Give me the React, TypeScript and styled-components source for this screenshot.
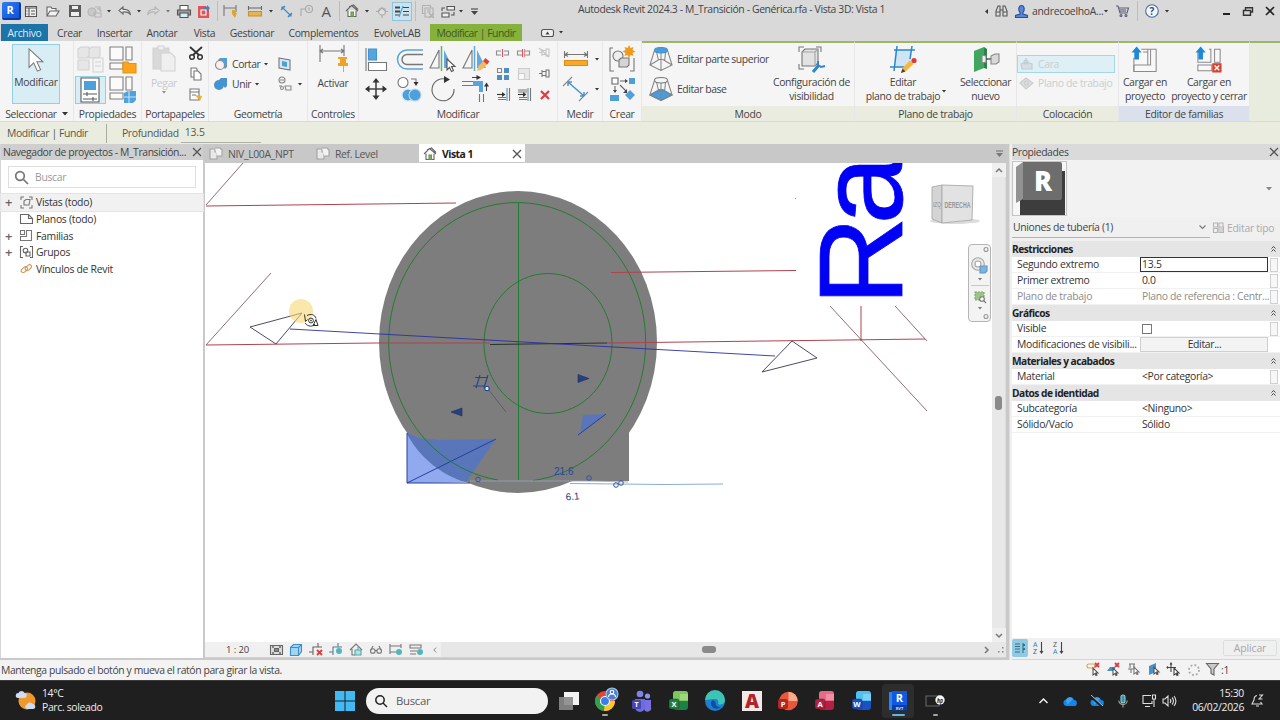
import React from 'react';
import styled, { createGlobalStyle } from 'styled-components';

const GlobalStyle = createGlobalStyle`
  * { box-sizing: border-box; }
  body {
    margin: 0;
    overflow: hidden;
    font-family: "Open Sans", "Noto Sans", sans-serif;
    font-size: 10.4px;
    letter-spacing: -0.33px;
    color: #444;
  }
`;

const Page = styled.div`
  width: 1280px;
  height: 720px;
  display: flex;
  flex-direction: column;
  background: #d9d9d9;
  white-space: nowrap;
`;

const Svg = styled.svg.attrs((p) => ({ strokeWidth: p.strokeWidth ?? 1.1 }))`
  display: block;
  flex-shrink: 0;
  overflow: visible;
  fill: none;
  letter-spacing: 0;
`;

const Spacer = styled.div<{ $w?: number }>`
  ${(p) => (p.$w ? `width: ${p.$w}px; flex-shrink: 0;` : 'flex: 1;')}
`;

const Text = styled.span<{ $ls?: number; $size?: number; $color?: string }>`
  ${(p) => (p.$ls ? `letter-spacing: ${p.$ls}px;` : '')}
  ${(p) => (p.$size ? `font-size: ${p.$size}px;` : '')}
  ${(p) => (p.$color ? `color: ${p.$color};` : '')}
`;

/* ---------- title bar ---------- */

const TitleBar = styled.div`
  height: 24px;
  display: flex;
  align-items: center;
  padding-bottom: 2px;
`;

const QatCell = styled.div<{ $w: number }>`
  width: ${(p) => p.$w}px;
  height: 22px;
  display: flex;
  align-items: center;
  justify-content: center;
  flex-shrink: 0;
`;

const QatActive = styled.div`
  width: 20px;
  height: 19px;
  display: flex;
  align-items: center;
  justify-content: center;
  background: #c9e4f0;
  border: 1px solid #8cc4dc;
`;

const QatSeparator = styled.div`
  width: 1px;
  height: 20px;
  background: #bdbdbd;
`;

const WindowTitle = styled.div`
  width: 402px;
  height: 22px;
  padding-left: 95px;
  line-height: 18px;
  letter-spacing: -0.37px;
  flex-shrink: 0;
`;

const UserName = styled.div`
  width: 70px;
  line-height: 20px;
  letter-spacing: -0.28px;
  flex-shrink: 0;
`;

const AppLogo = styled.div`
  width: 19px;
  height: 18px;
  background: linear-gradient(135deg, #2d7bf5, #0f55d8);
  border-right: 2px solid #0b3c9c;
  border-bottom: 2px solid #0b3c9c;
  border-radius: 2px;
  color: #fff;
  font-weight: 700;
  font-size: 11px;
  line-height: 16px;
  text-align: center;
`;

const TabsRow = styled.div`
  height: 17px;
  display: flex;
  align-items: stretch;
`;

const RibbonTab = styled.div<{ $w: number; $kind?: string }>`
  width: ${(p) => p.$w}px;
  text-align: center;
  line-height: 18px;
  ${(p) => (p.$kind === 'file' ? 'background: #1d74a8; color: #d8eef8; margin-left: 1px;' : '')}
  ${(p) => (p.$kind === 'context' ? 'background: #86b13c; color: #3f5a1c;' : '')}
`;

const TabEnd = styled.div`
  display: flex;
  align-items: center;
  gap: 5px;
  padding-left: 19px;
`;

/* ---------- ribbon ---------- */

const Ribbon = styled.div`
  height: 81px;
  display: flex;
  background: #e8ecdf;
  border-bottom: 1px solid #d8dbd2;
`;

const Group = styled.div<{ $w: number; $context?: boolean }>`
  width: ${(p) => p.$w}px;
  flex-shrink: 0;
  display: flex;
  flex-direction: column;
  background: #f5f5f5;
  border-right: 1px solid #e6e7e6;
  border-top: ${(p) => (p.$context ? '2px solid #9db66c' : '0')};
`;

const GroupBody = styled.div<{ $context?: boolean }>`
  height: ${(p) => (p.$context ? 63 : 65)}px;
  display: flex;
`;

const GroupTitle = styled.div<{ $bg?: string }>`
  height: 15px;
  display: flex;
  align-items: center;
  justify-content: center;
  gap: 5px;
  background: ${(p) => p.$bg ?? '#f5f5f5'};
`;

const RibbonTail = styled.div`
  flex: 1;
  border-top: 2px solid #9db66c;
`;

const SelectButton = styled.div`
  width: 48px;
  height: 60px;
  margin: 3px 0 0 12px;
  padding-top: 2px;
  display: flex;
  flex-direction: column;
  align-items: center;
  gap: 2px;
  background: #d9edf5;
  border: 1px solid #93cde6;
`;

const IconGrid = styled.div<{ $cols: string; $rows: string; $pt?: number }>`
  display: grid;
  grid-template-columns: ${(p) => p.$cols};
  grid-template-rows: ${(p) => p.$rows};
  padding-top: ${(p) => p.$pt ?? 0}px;
  place-items: center;
  align-content: start;
`;

const PressedBox = styled.div`
  width: 31px;
  height: 28px;
  display: flex;
  align-items: center;
  justify-content: center;
  background: #d9edf5;
  border: 1px solid #93cde6;
`;

const BigButton = styled.div<{ $w: number; $dim?: boolean; $pt?: number; $pl?: number }>`
  width: ${(p) => p.$w}px;
  padding-top: ${(p) => p.$pt ?? 3}px;
  padding-left: ${(p) => p.$pl ?? 0}px;
  display: flex;
  flex-direction: column;
  align-items: center;
  flex-shrink: 0;
  color: ${(p) => (p.$dim ? '#c8c8c8' : '#444')};
`;

const BigLabel = styled.div<{ $pt?: number }>`
  text-align: center;
  line-height: 13.5px;
  padding-top: ${(p) => p.$pt ?? 4}px;
`;

const Stack = styled.div<{ $w: number; $pt: number }>`
  width: ${(p) => p.$w}px;
  padding-top: ${(p) => p.$pt}px;
  display: flex;
  flex-direction: column;
  align-items: flex-start;
`;

const StackRow = styled.div<{ $h: number; $pl?: number; $gap?: number; $dim?: boolean; $boxed?: boolean }>`
  height: ${(p) => p.$h}px;
  padding-left: ${(p) => p.$pl ?? 0}px;
  display: flex;
  align-items: center;
  gap: ${(p) => p.$gap ?? 4}px;
  ${(p) => (p.$dim ? 'color: #c9cdce;' : '')}
  ${(p) => (p.$boxed ? 'width: 98px; background: #def0f5; border: 1px solid #a5d8e6;' : 'border: 1px solid transparent;')}
`;

const OptionsBar = styled.div`
  height: 22px;
  display: flex;
  align-items: center;
  background: #e9ecdf;
  color: #555a4c;
  padding: 0 0 0 7px;
`;

const OptionsDivider = styled.div`
  width: 1px;
  height: 19px;
  margin: 0 15px 0 18px;
  background: #a9aca0;
`;

const OptionsInput = styled.div`
  width: 80px;
  height: 19px;
  padding-left: 4px;
  margin-left: 2px;
  line-height: 17px;
  letter-spacing: -0.15px;
  border-bottom: 1px solid #aeb1a5;
`;

/* ---------- main area ---------- */

const Main = styled.div`
  height: 516px;
  display: flex;
  background: #c9c9c9;
`;

const Browser = styled.div`
  width: 203px;
  height: 514px;
  display: flex;
  flex-direction: column;
  background: #fff;
  border-left: 1px solid #d5d5d5;
`;

const PanelHeader = styled.div<{ $bg?: string }>`
  height: 16px;
  padding: 0 2px 0 2px;
  display: flex;
  align-items: center;
  justify-content: space-between;
  background: ${(p) => p.$bg ?? '#cfcfcf'};
  flex-shrink: 0;
`;

const SearchBox = styled.div`
  width: 188px;
  height: 22px;
  margin: 6px 0 6px 7px;
  padding-left: 6px;
  display: flex;
  align-items: center;
  gap: 7px;
  flex-shrink: 0;
  border: 1px solid #dedede;
  color: #999;
`;

const TreeRow = styled.div<{ $selected?: boolean }>`
  height: 16.7px;
  display: flex;
  align-items: center;
  color: #333;
  letter-spacing: -0.28px;
  outline: ${(p) => (p.$selected ? '1px solid #e4e4e4' : '0')};
  background: ${(p) => (p.$selected ? '#f1f1f1' : 'transparent')};
`;

const Expander = styled.div`
  width: 15px;
  text-align: center;
  color: #666;
  font-size: 13px;
  font-weight: 600;
`;

const TreeIcon = styled.div`
  width: 20px;
  display: flex;
  justify-content: center;
`;

const Workspace = styled.div`
  width: 803px;
  padding-left: 2px;
  display: flex;
  flex-direction: column;
`;

const DocTabs = styled.div`
  height: 19px;
  padding-bottom: 1px;
  display: flex;
  align-items: center;
  background: #c8c8c8;
`;

const DocTab = styled.div<{ $w: number; $active?: boolean }>`
  width: ${(p) => p.$w}px;
  height: 18px;
  padding: 1px 4px 0 4px;
  display: flex;
  align-items: center;
  gap: 5px;
  background: ${(p) => (p.$active ? '#fff' : 'transparent')};
  color: ${(p) => (p.$active ? '#222' : '#555')};
  font-weight: ${(p) => (p.$active ? 700 : 400)};
`;

const ViewRow = styled.div`
  height: 479px;
  display: flex;
`;

const Viewport = styled.div`
  position: relative;
  width: 787px;
  height: 479px;
  background: #fff;
  overflow: hidden;
`;

const CubeSlot = styled.div`
  position: absolute;
  left: 722px;
  top: 18px;
`;

const NavBar = styled.div`
  position: absolute;
  left: 763px;
  top: 81px;
  width: 23px;
  height: 78px;
  padding: 2px 0;
  display: flex;
  flex-direction: column;
  align-items: center;
  justify-content: space-between;
  background: #f3f3f3;
  border: 1px solid #b5b5b5;
  border-radius: 4px;
`;

const NavRule = styled.div`
  width: 18px;
  height: 1px;
  background: #c9c9c9;
`;

const VScroll = styled.div`
  width: 14px;
  background: #e8e8e8;
  display: flex;
  flex-direction: column;
  align-items: center;
  border-right: 1px solid #dcdcdc;
`;

const ScrollArrow = styled.div`
  height: 14px;
  width: 14px;
  display: flex;
  align-items: center;
  justify-content: center;
  background: #efefef;
`;

const VThumb = styled.div`
  width: 7px;
  height: 14px;
  margin-top: 219px;
  border-radius: 3px;
  background: #8a8a8a;
`;

const ViewControls = styled.div`
  height: 16px;
  display: flex;
  align-items: center;
  background: #e7e7e7;
  border-bottom: 1px solid #d2d2d2;
`;

const ControlIcons = styled.div`
  height: 15px;
  display: flex;
  align-items: center;
  gap: 4px;
  padding-left: 21px;
  width: 236px;
  background: #f0f0f0;
`;

const ScaleText = styled.div`
  width: 26px;
  font-size: 9.5px;
  letter-spacing: -0.1px;
`;

const IconSlot = styled.div<{ $w: number }>`
  width: ${(p) => p.$w}px;
  display: flex;
  justify-content: center;
  flex-shrink: 0;
`;

const HThumb = styled.div`
  width: 14px;
  height: 7px;
  margin-left: 261px;
  border-radius: 3px;
  background: #8a8a8a;
`;

const Properties = styled.div`
  width: 271px;
  height: 516px;
  margin-left: 3px;
  padding-left: 2px;
  display: flex;
  flex-direction: column;
  background: #f0f0f0;
  border-left: 1px solid #ddd;
`;

const PropertiesTitle = styled(PanelHeader)`
  padding-left: 0;
`;

const TypePreview = styled.div`
  height: 57px;
  display: flex;
  align-items: center;
  justify-content: space-between;
  padding-right: 8px;
  background: #f2f2f2;
`;

const TypeCombo = styled.div`
  height: 21px;
  display: flex;
  align-items: center;
`;

const ComboField = styled.div`
  width: 198px;
  height: 21px;
  padding: 0 4px 0 1px;
  display: flex;
  align-items: center;
  justify-content: space-between;
  border-bottom: 1px solid #b3b3b3;
`;

const EditType = styled.div`
  display: flex;
  align-items: center;
  gap: 3px;
  padding-left: 3px;
  color: #aaa;
  letter-spacing: -0.26px;
`;

const PropList = styled.div`
  flex: 1;
  margin-top: 3px;
  background: #fff;
`;

const PropHeading = styled.div`
  height: 16px;
  display: flex;
  align-items: center;
  justify-content: space-between;
  padding: 0 4px 0 0;
  background: #e5e5e5;
  color: #222;
  font-weight: 700;
  font-size: 10.2px;
  letter-spacing: -0.52px;
`;

const PropRow = styled.div<{ $dim?: boolean }>`
  height: 16px;
  display: grid;
  grid-template-columns: 128px 130px 9px;
  align-items: center;
  border-bottom: 1px solid #f1f1f1;
  color: ${(p) => (p.$dim ? '#8c8c8c' : '#333')};
`;

const PropName = styled.div`
  padding-left: 5px;
  line-height: 15px;
  letter-spacing: -0.28px;
`;

const PropValue = styled.div<{ $kind?: string }>`
  height: 15px;
  width: 128px;
  padding-left: 1px;
  line-height: 13px;
  border: 1px solid transparent;
  ${(p) => (p.$kind === 'focus' ? 'border-color: #333; line-height: 13px; background: #fff; letter-spacing: -0.2px;' : '')}
  ${(p) => (p.$kind === 'button' ? 'border-color: #d0d0d0; background: #f3f3f3; text-align: center; line-height: 13px;' : '')}
`;

const CheckBox = styled.div`
  width: 10px;
  height: 10px;
  margin: 2px 0 0 0;
  border: 1px solid #777;
  background: #fff;
`;

const AssocButton = styled.div`
  width: 8px;
  height: 14px;
  border: 1px solid #d0d0d0;
  background: #f7f7f7;
`;

const PropFooter = styled.div`
  height: 22px;
  display: flex;
  align-items: center;
  gap: 5px;
  padding: 0 3px 2px 0;
  flex-shrink: 0;
  border-bottom: 1px solid #d5d5d5;
`;

const SortActive = styled.div`
  width: 16px;
  height: 18px;
  display: flex;
  align-items: center;
  justify-content: center;
  background: #8fc9e2;
  border-radius: 2px;
`;

const ApplyButton = styled.div`
  width: 54px;
  height: 16px;
  line-height: 14px;
  text-align: center;
  color: #a6a6a6;
  letter-spacing: -0.1px;
  border: 1px solid #dedede;
  border-radius: 2px;
`;

const StatusBar = styled.div`
  height: 20px;
  display: flex;
  align-items: center;
  background: #f3f3f3;
  padding: 0 0 1px 1px;
`;

/* ---------- windows taskbar ---------- */

const Taskbar = styled.div`
  height: 40px;
  display: flex;
  align-items: center;
  background: #1f1f1f;
  border-top: 1px solid #3a3a3a;
  color: #eee;
`;

const Weather = styled.div`
  width: 319px;
  padding-left: 16px;
  display: flex;
  align-items: center;
  gap: 6px;
  line-height: 13.5px;
`;

const TaskSearch = styled.div`
  width: 182px;
  height: 26px;
  margin-left: 11px;
  padding-left: 9px;
  display: flex;
  align-items: center;
  gap: 9px;
  border-radius: 13px;
  background: #f2f2f2;
  color: #5c5c5c;
  font-size: 11.4px;
`;

const TaskCell = styled.div<{ $active?: boolean }>`
  width: 32.6px;
  height: 34px;
  margin: 0 2px;
  display: flex;
  align-items: center;
  justify-content: center;
  border-radius: 4px;
  background: ${(p) => (p.$active ? '#2d2d2d' : 'transparent')};
`;

const TaskIcons = styled.div`
  display: flex;
  padding-left: 2.5px;
`;

const Clock = styled.div`
  width: 67px;
  text-align: right;
  line-height: 13.5px;
`;

/* ---------- small pieces ---------- */

const Caret = ({ color = '#333', size = 5 }: { color?: string; size?: number }) => (
  <Svg width={size} height={size * 0.6} viewBox="0 0 5 3"><path d="M0 0h5L2.5 3z" fill={color} /></Svg>
);

const Cross = ({ size = 8, color = '#555', sw = 1.3 }: { size?: number; color?: string; sw?: number }) => (
  <Svg width={size} height={size} viewBox="0 0 8 8" stroke={color} strokeWidth={sw}><path d="M0 0l8 8M8 0L0 8" /></Svg>
);

const Qat = ({ w, children }: { w: number; children?: React.ReactNode }) => <QatCell $w={w}>{children}</QatCell>;

const House = () => (
  <Svg width="14" height="14" viewBox="0 0 14 14" stroke="#666">
    <path d="M3 6.5v6h8v-6" fill="#fff" />
    <path d="M1 7l5.5-5.5L13 7M4 3L8.5 1l4.5 4.5" />
    <path d="M6 12.500V8h2.500v4.500z" fill="#8cb36a" stroke="#6c8e50" />
  </Svg>
);

const PlanIcon = () => (
  <Svg width="14" height="13" viewBox="0 0 14 13" stroke="#a3a3a3">
    <path d="M1 2h5v3h2v7H1z" fill="#e9e9e9" /><path d="M6 1h5l2 2v6H8" fill="#f3f3f3" />
  </Svg>
);

const chevrons = (
  <Svg width="5" height="6" viewBox="0 0 5 6" stroke="#333" strokeWidth=".9"><path d="M.5 2.500l2-2 2 2M.5 5.500l2-2 2 2" /></Svg>
);

const FamilySheets = ({ overlay }: { overlay: 'folder' | 'grid' }) => (
  <Svg width="27" height="27" viewBox="0 0 27 27" stroke="#808080">
    <path d="M1 1h13v13H1zM17 1h6v13h-6zM1 17h13v6H1z" fill="#fbfbfb" />
    {overlay === 'folder' ? (
      <path d="M14 16h5l1 1.500h7V27H14z" fill="#fba41c" stroke="#e8930f" />
    ) : (
      <><path d="M15 17l4-2h8v9l-3 3h-9z" fill="#4fa3dc" stroke="none" /><path d="M15 21h12M20 15v12" stroke="#c5e3f5" /></>
    )}
  </Svg>
);

/* truncated pyramid with either its top or its base filled */
const Frustum = ({ top }: { top?: boolean }) => (
  <Svg width="24" height="26" viewBox="0 0 26 27" stroke="#858585">
    {!top && <path d="M1 20l12-6 12 6-12 6z" fill="#4b9dda" stroke="#3d8cc8" />}
    <path d="M6 4L1 20l12 6 12-6-5-16M8 5l2 9M18 5l-1 10M13 7v19M1 20l10-6h4l10 6" />
    <ellipse cx="13" cy="4" rx="7" ry="3" fill={top ? '#4b9dda' : '#f5f5f5'} stroke={top ? '#3d8cc8' : '#777'} />
  </Svg>
);

const Mirror = ({ pencil }: { pencil?: boolean }) => (
  <Svg width="27" height="26" viewBox="0 0 27 26" stroke="#777">
    <path d="M10 4v18H1z" fill="#f6f6f6" />
    <path d="M15 4v18h9z" fill="#63a9de" stroke="none" />
    <path d="M12.500 0v25" stroke={pencil ? '#56aee0' : '#58b77a'} strokeWidth="1.500" />
    {pencil ? (
      <><path d="M15 25l1.500-5 6-6 3.500 3.500-6 6z" fill="#f4b866" stroke="none" /><path d="M21 15l2.500-3 4 3.500-2.500 3z" fill="#d9423a" stroke="none" /></>
    ) : (
      <path d="M18 13v11l2.500-2.500 2 4 2-1-2-4H26z" fill="#fff" stroke="#555" />
    )}
  </Svg>
);

const Trim = () => (
  <Svg width="27" height="26" viewBox="0 0 27 26" stroke="#777">
    <path d="M0 5.500h11M0 9.500h11" />
    <path d="M11 5h10v11h-4V10h-6z" fill="#57a5dd" stroke="none" />
    <path d="M17.500 18v8M21.500 18v8" />
    <path d="M10 1.500h5M24.500 15v-5" stroke="#444" />
    <path d="M14.500-1l4.500 2.500-4.500 2.500zM22 10.500l2.500-4 2.500 4z" fill="#333" stroke="none" />
  </Svg>
);

/* left / right jaws with a red split line */
const Split = ({ two }: { two?: boolean }) => (
  <Svg width="13" height="8" viewBox="0 0 13 8" stroke="#8d8d8d">
    <path d="M5 2H.5v4H5M8 2h4.500v4H8" />
    <path d={two ? 'M5.500 0v8' : 'M6.500 0v8'} stroke="#e05560" />
    {two && <path d="M7.500 0v8" stroke="#e08a90" />}
  </Svg>
);

const PinSmall = ({ color, cut }: { color: string; cut?: boolean }) => (
  <Svg width="11" height="9" viewBox="0 0 11 9" stroke={color}>
    <path d="M0 4.500h3M3 1v7M3 2.500h4v4H3M7 1h3v7H7z" />
    {cut && <path d="M0 0l10 9" />}
  </Svg>
);

const ExtendSmall = ({ multi }: { multi?: boolean }) => (
  <Svg width="14" height="13" viewBox="0 0 14 13" stroke="#777">
    <path d="M11 0v13" stroke="#5f8fae" /><path d="M13.500 0v13" />
    <path d="M1 6.500h6" stroke="#333" /><path d="M6 4l3.500 2.500L6 9z" fill="#333" stroke="none" />
    <path d="M2 9.500h8M2 11.500h8" />
    {multi && <path d="M1 2h9M1 4h9" />}
  </Svg>
);

const LoadProject = ({ close }: { close?: boolean }) => (
  <Svg width="26" height="27" viewBox="0 0 28 28" stroke="#8a8a8a">
    {close ? (
      <path d="M14 3h2v14H2V6M20 3h6v14h-6zM2 20h15v6H2z" fill="#f8f8f8" />
    ) : (
      <><path d="M10 3h16v24H2v-7" fill="#f8f8f8" /><path d="M12 6h5v14H2v-8M20 3v17H2v7M17 20V3" /></>
    )}
    <path d="M5 0l5.500 6.500H7.500V14h-5V6.500H-.5z" fill="#1e88d6" stroke="none" />
    {close && <><rect x="17.500" y="18" width="10" height="10" fill="#d9402f" stroke="none" /><path d="M20 20.500l5 5M25 20.500l-5 5" stroke="#fff" strokeWidth="1.500" /></>}
  </Svg>
);

/* ---------- 3D view ---------- */

const ModelView = () => (
  <Svg width="787" height="479" viewBox="205 163 787 479" strokeWidth="1">
    <path d="M407 432h222v49H407z" fill="#7d7d7d" />
    <ellipse cx="518" cy="342" rx="139" ry="151" fill="#7d7d7d" />
    <path d="M407 433l12 5 20 2 57-1-16 23-14 20-59 1z" fill="#5475c4" fillOpacity=".88" />
    <path d="M407 434c12 22 32 40 58 48l-58 1z" fill="#90a9ef" />
    <path d="M407 433v50h63M407 483l89-44" stroke="#26409c" />
    <path d="M583 415l23-1-26 20z" fill="#5475c4" fillOpacity=".88" />
    <path d="M578 435l28-21" stroke="#26409c" />
    <g stroke="#1a7a28" strokeWidth=".9">
      <path d="M498 480A128.500 139.500 0 1 1 533 480.500" />
      <ellipse cx="548" cy="343.500" rx="64" ry="70" />
      <path d="M518.500 203v277" />
    </g>
    <g stroke="#b0424f">
      <path d="M206 206l250-3M206 345l170-2 114 0M607 343l318-4M611 272.500l185-2M861 306v35" />
    </g>
    <path d="M490 344.500l117-1.500" stroke="#27352b" strokeWidth="1.200" />
    <g stroke="#76474f" strokeWidth=".8">
      <path d="M206 205l37-42M206 345l65-72M830 306l97 105M895 306l32 35" />
    </g>
    <path d="M290 329l485 27" stroke="#2b2f9e" strokeWidth=".9" />
    <path d="M302 313l-52 14 26 17zM792 341l25 17-55 14z" stroke="#3a3550" strokeWidth=".9" />
    <path d="M488 389l18 23" stroke="#555" strokeWidth=".8" />
    <path d="M451 412l11-4v8zM589 378.500l-11-4v8z" fill="#26417e" stroke="#1c2f63" strokeWidth=".6" />
    <g stroke="#22468c" strokeWidth="1.100">
      <path d="M475 377.500h13M473 386h12M480 375l-4 13M488 375l-4 13" />
      <rect x="485" y="386.500" width="4" height="4" rx="1" fill="#dfe8f8" />
    </g>
    <path d="M470 481h120l38 1" stroke="#9aa3b8" strokeWidth=".8" />
    <path d="M570 483.500l95 1 58-.5" stroke="#8dabd6" strokeWidth="1.200" />
    <g stroke="#3352a0">
      <circle cx="478" cy="479.500" r="2.300" /><circle cx="589" cy="478" r="2.300" />
      <circle cx="616" cy="485" r="2.300" /><circle cx="621" cy="483" r="2.300" />
    </g>
    <g fontFamily="Liberation Sans, sans-serif">
      <text x="554" y="475" fontSize="10" fill="#1f4a9e">21.6</text>
      <text x="566" y="500.500" fontSize="10" fill="#223a80" transform="rotate(-6 566 500)">6.1</text>
      <text transform="translate(902 306) rotate(-90) scale(1.04 1)" fontSize="119.500" fill="#0000f5" stroke="#0000f5" strokeWidth=".8">R<tspan dx="-8">a</tspan></text>
    </g>
    <circle cx="301" cy="311" r="12" fill="#f7d774" fillOpacity=".6" />
    <g stroke="#333" strokeWidth="1">
      <path d="M304.500 314.500l1 7 2-2M307 315.500c4-2 8-1 9 3M305 323c3 4 8 4 10 1" />
      <circle cx="311" cy="320.500" r="2.400" /><circle cx="311" cy="320.500" r=".5" />
      <path d="M313 325.500l3-6 2 6z" />
    </g>
    <path d="M795 198.500h1" stroke="#999" />
  </Svg>
);

const ViewCube = () => (
  <Svg width="56" height="44" viewBox="0 0 56 44" strokeWidth=".9">
    <ellipse cx="28" cy="40" rx="25" ry="3" fill="#dcdcdc" />
    <path d="M5 6l10-2v38L5 38z" fill="#d4d4d4" stroke="#a9a9a9" />
    <path d="M15 4l31 1-1 34-30 3z" fill="#e2e2e2" stroke="#a9a9a9" />
    <text x="30.500" y="26.500" fontSize="9" fontWeight="700" textAnchor="middle" textLength="26" lengthAdjust="spacingAndGlyphs" fill="#969696" fontFamily="Liberation Sans, sans-serif">DERECHA</text>
    <text x="10" y="26" fontSize="8" textAnchor="middle" textLength="8" lengthAdjust="spacingAndGlyphs" fill="#8d8d8d" fontFamily="Liberation Sans, sans-serif">IZQ</text>
  </Svg>
);

const OfficeIcon = ({ letter, light, dark }: { letter: string; light: string; dark: string }) => (
  <Svg width="20" height="20" viewBox="0 0 20 20">
    <rect x="4" y="0" width="15" height="19" rx="3" fill={dark} />
    <path d="M4 7V3a3 3 0 013-3h9a3 3 0 013 3v7H4z" fill={light} />
    <path d="M11 9V3h8v6z" fill="#fff" fillOpacity=".25" />
    <rect x="0" y="8" width="10" height="10" rx="2" fill={dark} stroke="#1f1f1f" strokeWidth=".4" />
    <text x="5" y="15.600" fontSize="7.500" fontWeight="700" textAnchor="middle" fill="#fff">{letter}</text>
  </Svg>
);

const Cloud = ({ off }: { off?: boolean }) => (
  <Svg width="14" height="12" viewBox="0 0 14 12">
    <path d="M3.500 11a3.300 3.300 0 01-.5-6.500A4.300 4.300 0 0111 5a3 3 0 01-.3 6z" fill="#1685e8" />
    <path d="M3 5a4 4 0 017-1L4 10z" fill="#4fb0f5" fillOpacity=".7" />
    {off && <path d="M0 1l13 11" stroke="#1f1f1f" strokeWidth="2.500" />}
    {off && <path d="M1 0l12 11" stroke="#9cc9ee" strokeWidth="1" />}
  </Svg>
);

type Prop = { name: string; value?: string; kind?: string; dim?: boolean; check?: boolean; noAssoc?: boolean };

const PROPERTIES: { title: string; rows: Prop[] }[] = [
  {
    title: 'Restricciones',
    rows: [
      { name: 'Segundo extremo', value: '13.5', kind: 'focus' },
      { name: 'Primer extremo', value: '0.0' },
      { name: 'Plano de trabajo', value: 'Plano de referencia : Centr...', dim: true },
    ],
  },
  {
    title: 'Gráficos',
    rows: [
      { name: 'Visible', check: true },
      { name: 'Modificaciones de visibili...', value: 'Editar...', kind: 'button', noAssoc: true },
    ],
  },
  { title: 'Materiales y acabados', rows: [{ name: 'Material', value: '<Por categoría>' }] },
  {
    title: 'Datos de identidad',
    rows: [
      { name: 'Subcategoría', value: '<Ninguno>', noAssoc: true },
      { name: 'Sólido/Vacío', value: 'Sólido', noAssoc: true },
    ],
  },
];

const TopBar = () => (
  <TitleBar>
    <Qat w={22}><AppLogo>R</AppLogo></Qat>
    <Qat w={18}>
      <Svg width="12" height="11" viewBox="0 0 12 11" stroke="#555"><path d="M.5.5h11v10H.5z" fill="#f2f2f2" /><path d="M0 2h12M4 2v9M6 5h4M6 8h4M1.500 5h1M1.500 8h1" /></Svg>
    </Qat>
    <Qat w={26}>
      <Svg width="14" height="11" viewBox="0 0 14 11" stroke="#666"><path d="M1 10V1h4l1 1.500h4V5M1 10l3-5h9l-3 5z" fill="#f2f2f2" /></Svg>
    </Qat>
    <Qat w={17}>
      <Svg width="12" height="12" viewBox="0 0 12 12"><path d="M0 0h12v12H0z" fill="#5b5b5b" /><path d="M3 1h6v3H3zM2 7h8v4H2z" fill="#eee" /></Svg>
    </Qat>
    <Qat w={22}>
      <Svg width="15" height="13" viewBox="0 0 15 13" stroke="#b3b3b3"><circle cx="5" cy="7" r="4" fill="#c8c8c8" /><path d="M8 2h5v4M7 8h7v4H8zM10 4a3 3 0 014 3" /></Svg>
    </Qat>
    <Qat w={8}><Caret size={4} /></Qat>
    <Qat w={22}>
      <Svg width="13" height="10" viewBox="0 0 13 10" stroke="#666"><path d="M5 1L1 4.500 5 8V6c4-.5 6 .5 7.500 3-.5-4-3-6-7.500-5.500z" fill="#eee" /></Svg>
    </Qat>
    <Qat w={8}><Caret size={4} /></Qat>
    <Qat w={20}>
      <Svg width="13" height="10" viewBox="0 0 13 10" stroke="#b5b5b5"><path d="M8 1l4 3.500L8 8V6C4 5.500 2 6.500.500 9 1 5 3.500 3 8 3.500z" fill="#ddd" /></Svg>
    </Qat>
    <Qat w={10}><Caret size={4} color="#777" /></Qat>
    <Qat w={22}>
      <Svg width="14" height="13" viewBox="0 0 14 13" stroke="#555"><path d="M3 5V.5h8V5" fill="#fff" /><path d="M.5 5h13v5H.5z" fill="#9a9a9a" /><path d="M3 8h8v4.500H3z" fill="#d5ecf7" /></Svg>
    </Qat>
    <Qat w={16}>
      <Svg width="13" height="13" viewBox="0 0 13 13"><path d="M1 1h8l3 3v9H1z" fill="#d9565a" /><path d="M4 5h5v5H4z" stroke="#fff" /><path d="M6 2h4V0l3 3-3 3V4H6z" fill="#2f8ad0" /></Svg>
    </Qat>
    <Qat w={12}><QatSeparator /></Qat>
    <Qat w={14}>
      <Svg width="14" height="13" viewBox="0 0 14 13" stroke="#777"><path d="M1 0v11M13 0v7M1 3h12" /><path d="M9 5h4v3h1l-2 5-3-4z" fill="#e0a52e" stroke="none" /></Svg>
    </Qat>
    <Spacer $w={8} />
    <Qat w={20}>
      <Svg width="14" height="11" viewBox="0 0 14 11" stroke="#666"><path d="M.5 0v4M13.500 0v4M.5 2h13" /><path d="M.5 5.500h13v4.500H.5z" fill="#e6b455" stroke="#c9922d" /></Svg>
    </Qat>
    <Qat w={12}><Caret size={4} /></Qat>
    <Qat w={18}>
      <Svg width="13" height="13" viewBox="0 0 13 13" stroke="#3c8cc2"><path d="M3 3l7 7M1 5l4-4M8 12l4-4" /><path d="M2 2l2 0-2 2zM11 11H9l2-2z" fill="#3c8cc2" /></Svg>
    </Qat>
    <Qat w={22}>
      <Svg width="13" height="12" viewBox="0 0 13 12" stroke="#a8a8a8"><circle cx="9" cy="4" r="3.500" /><path d="M5 4H1v7M9 2.500v3" /></Svg>
    </Qat>
    <Qat w={18}><Text $size={15} $color="#555">A</Text></Qat>
    <Qat w={8}><QatSeparator /></Qat>
    <Qat w={18}><House /></Qat>
    <Qat w={12}><Caret size={4} /></Qat>
    <Qat w={18}>
      <Svg width="12" height="13" viewBox="0 0 12 13" stroke="#aaa"><circle cx="6" cy="6.500" r="3.500" fill="#e2e2e2" /><path d="M0 6.500h2.500L6 3l3.500 3.500H12M6 10v3" /></Svg>
    </Qat>
    <Qat w={22}>
      <QatActive>
        <Svg width="14" height="11" viewBox="0 0 14 11" stroke="#444"><path d="M0 1.500h5M0 5.500h5" strokeWidth="2" /><path d="M0 9h5M8 1.500h6M8 5.500h6M8 9h6" /><path d="M8 0L4 11" stroke="#4ea0cc" /></Svg>
      </QatActive>
    </Qat>
    <Qat w={4}><QatSeparator /></Qat>
    <Qat w={22}>
      <Svg width="13" height="13" viewBox="0 0 13 13" stroke="#b0b0b0"><path d="M.5.500h8v2M.5.500v8H3M3 3h8v9H3zM5 5h4M5 7h4" /><path d="M7 8l5 5M12 8l-5 5" /></Svg>
    </Qat>
    <Qat w={18}>
      <Svg width="14" height="13" viewBox="0 0 14 13" stroke="#555"><path d="M6 1.500h7.500V5H6zM1 8h7v4H1z" fill="#eee" /><path d="M1 6V3h3M13 7v3h-3" /></Svg>
    </Qat>
    <Qat w={8}><Caret size={4} /></Qat>
    <Qat w={18}>
      <Svg width="7" height="7" viewBox="0 0 7 7" stroke="#444"><path d="M0 1h7" /><path d="M0 3h7L3.500 7z" fill="#444" stroke="none" /></Svg>
    </Qat>
    <WindowTitle>Autodesk Revit 2024.3 - M_Transición - Genérica.rfa - Vista 3D: Vista 1</WindowTitle>
    <Spacer $w={96} />
    <Qat w={10}><Svg width="3" height="5" viewBox="0 0 3 5"><path d="M3 0v5L0 2.500z" fill="#333" /></Svg></Qat>
    <Qat w={20}>
      <Svg width="13" height="12" viewBox="0 0 13 12" stroke="#555"><path d="M1 11V6l2-5h2v10zM8 11V1h2l2 5v5zM5 5h3M1 7h4M8 7h4" fill="#ddd" /></Svg>
    </Qat>
    <Qat w={20}>
      <Svg width="13" height="13" viewBox="0 0 13 13" stroke="#2a4f9c"><path d="M.5 12.500v-2L5 9V7.500C3 5 3.500.5 6.500.5S10 5 8 7.500V9l4.500 1.500v2z" fill="#5b86d8" /></Svg>
    </Qat>
    <Spacer $w={1} />
    <UserName>andrecoelhoA...</UserName>
    <Qat w={8}><Caret size={4} /></Qat>
    <Spacer $w={2} />
    <Qat w={20}>
      <Svg width="13" height="12" viewBox="0 0 13 12" stroke="#5c5c78"><path d="M0 1h2l2 7h7l1.500-5H3M5 4v3M7 4v3M9 4v3" /><circle cx="5" cy="10.500" r="1" /><circle cx="10" cy="10.500" r="1" /></Svg>
    </Qat>
    <Qat w={10}><QatSeparator /></Qat>
    <Qat w={20}>
      <Svg width="14" height="14" viewBox="0 0 14 14" stroke="#4a6a9c"><circle cx="7" cy="7" r="6.300" fill="#f3f6fb" /><text x="7" y="10.800" fontSize="10" fontWeight="700" textAnchor="middle" fill="#2c4f94" stroke="none">?</text></Svg>
    </Qat>
    <Qat w={10}><Caret size={4} /></Qat>
    <Spacer />
    <Svg width="7" height="8" viewBox="0 0 7 8" stroke="#222"><path d="M0 7h7" strokeWidth="2" /></Svg>
    <Spacer $w={13} />
    <Svg width="10" height="9" viewBox="0 0 10 9" stroke="#333"><path d="M2.500 3V.8h7V5H8M.5 3.500h7v4.700h-7z" strokeWidth="1.400" /></Svg>
    <Spacer $w={13} />
    <Cross size={8} color="#222" sw={1.6} />
    <Spacer $w={6} />
  </TitleBar>
);

const RibbonPanels = () => (
  <Ribbon>
    <Group $w={74}>
      <GroupBody>
        <SelectButton>
          <Svg width="16" height="26" viewBox="0 0 17 28" stroke="#777"><path d="M1 2v20l5-5 4 9 3.500-1.500L9.500 16H16z" fill="#fff" /></Svg>
          <Text $ls={-0.25}>Modificar</Text>
        </SelectButton>
      </GroupBody>
      <GroupTitle>Seleccionar <Caret size={6} /></GroupTitle>
    </Group>
    <Group $w={68}>
      <GroupBody>
        <IconGrid $cols="32px 33px" $rows="30px 31px" $pt={3}>
          <Svg width="26" height="26" viewBox="0 0 26 26" stroke="#d2d2d2">
            <path d="M1 3l3-2h8v9l-2 2H1zM12 3l3-2h8v9l-2 2h-9zM1 14h11v10H1z" fill="#e6e6e6" /><path d="M16 12h10v14H16zM18 16h6M18 20h6" fill="#f3f3f3" />
          </Svg>
          <FamilySheets overlay="folder" />
          <PressedBox>
            <Svg width="20" height="26" viewBox="0 0 20 26" stroke="#5a5a5a"><path d="M1 1h18v24H1z" fill="#fff" /><path d="M4 4h12v9H4z" fill="#4fa0da" stroke="none" /><path d="M3 17h14M7 15v4M3 22h14M13 20v4" /></Svg>
          </PressedBox>
          <FamilySheets overlay="grid" />
        </IconGrid>
      </GroupBody>
      <GroupTitle><Text $ls={-0.3}>Propiedades</Text></GroupTitle>
    </Group>
    <Group $w={67}>
      <GroupBody>
        <BigButton $w={44} $dim $pt={4}>
          <Svg width="24" height="28" viewBox="0 0 24 28" stroke="#d2d2d2"><path d="M1 3h16v21H1z" fill="#d9d9d9" /><path d="M6 1h6v4H6zM9 8h10l4 4v14H9z" fill="#efefef" /></Svg>
          <BigLabel>Pegar</BigLabel>
          <Caret size={4} color="#888" />
        </BigButton>
        <IconGrid $cols="20px" $rows="20px 21px 21px" $pt={2}>
          <Svg width="14" height="13" viewBox="0 0 14 13" stroke="#333"><path d="M1 0l9 8M13 0L4 8" strokeWidth="1.800" /><circle cx="3" cy="10" r="2.300" strokeWidth="1.500" /><circle cx="11" cy="10" r="2.300" strokeWidth="1.500" /></Svg>
          <Svg width="12" height="14" viewBox="0 0 12 14" stroke="#777"><path d="M1 1h5l1 1v8H1z" fill="#fff" /><path d="M4 4h4l3 3v6H4z" fill="#fff" /></Svg>
          <Svg width="14" height="13" viewBox="0 0 14 13" stroke="#777"><path d="M1 1h9v11H1zM1 4h9M3 7h4" fill="#fff" /><path d="M6 7l7 1-2 5z" fill="#e8ad3a" stroke="none" /></Svg>
        </IconGrid>
      </GroupBody>
      <GroupTitle><Text $ls={-0.38}>Portapapeles</Text></GroupTitle>
    </Group>
    <Group $w={99}>
      <GroupBody>
        <Stack $w={67} $pt={13}>
          <StackRow $h={20} $pl={4} $gap={4}>
            <Svg width="14" height="14" viewBox="0 0 14 14"><path d="M4 3l2-2h7v9l-2 2z" fill="#4f9fda" /><circle cx="6" cy="8" r="4.500" fill="#f5f0f1" stroke="#9a8088" /></Svg>
            <Text $ls={-0.4}>Cortar</Text><Caret size={4} />
          </StackRow>
          <StackRow $h={20} $pl={4} $gap={4}>
            <Svg width="14" height="14" viewBox="0 0 14 14"><path d="M5 3l2-2h6v8l-2 2z" fill="#4593d0" /><circle cx="5" cy="8" r="5" fill="#4593d0" /></Svg>
            <Text $ls={-0.4}>Unir</Text><Caret size={4} />
          </StackRow>
        </Stack>
        <Stack $w={30} $pt={13}>
          <StackRow $h={20} $pl={1}>
            <Svg width="13" height="14" viewBox="0 0 13 14" stroke="#777"><path d="M1 1l11 2v10L1 11z" fill="#d5e8f3" /><path d="M4 4l5 1v5L4 9z" fill="#4f9fda" stroke="none" /></Svg>
          </StackRow>
          <StackRow $h={20} $pl={1} $gap={6}>
            <Svg width="14" height="14" viewBox="0 0 14 14" stroke="#888"><circle cx="4" cy="3" r="3" /><path d="M2 3h4M1 9h3M7 9h6v4H8z" /><circle cx="4" cy="11" r="1.500" /></Svg>
            <Caret size={4} />
          </StackRow>
        </Stack>
      </GroupBody>
      <GroupTitle>Geometría</GroupTitle>
    </Group>
    <Group $w={51}>
      <GroupBody>
        <BigButton $w={50} $pt={4}>
          <Svg width="28" height="27" viewBox="0 0 28 27" stroke="#777"><path d="M1 0v17M25 0v11M1 6h24M4 4L1 6l3 2M22 4l3 2-3 2" /><path d="M19 12h9v2h-1v4h2v3h-4v6h-1v-6h-5v-3h2v-4h-2z" fill="#f0a325" stroke="none" /></Svg>
          <BigLabel $pt={5}>Activar</BigLabel>
        </BigButton>
      </GroupBody>
      <GroupTitle>Controles</GroupTitle>
    </Group>
    <Group $w={199}>
      <GroupBody>
        <IconGrid $cols="34px 33px 33px 33px" $rows="30px 30px" $pt={3}>
          <Svg width="22" height="23" viewBox="0 0 22 23" stroke="#777"><path d="M1 0v23" /><path d="M3.500 1h8v11h-8z" fill="#57a5dd" stroke="#4593d0" /><path d="M3.500 14.500h18v8h-18z" fill="#fff" /></Svg>
          <Svg width="27" height="21" viewBox="0 0 27 21"><path d="M27 1H11a9.500 9.500 0 000 19h16" stroke="#57a5dd" strokeWidth="1.500" /><path d="M27 5.500H11a5 5 0 000 10h16" stroke="#777" strokeWidth="1.400" /></Svg>
          <Mirror />
          <Mirror pencil />
          <Svg width="22" height="22" viewBox="0 0 22 22" stroke="#444"><path d="M11 3v16M3 11h16" strokeWidth="1.600" /><path d="M11 0l3.500 4.500h-7zM11 22l3.500-4.500h-7zM0 11l4.500-3.500v7zM22 11l-4.500-3.500v7z" fill="#333" stroke="none" /></Svg>
          <Svg width="25" height="24" viewBox="0 0 25 24" stroke="#777"><circle cx="6" cy="5.500" r="5" fill="#fff" /><path d="M14 2h5v4" /><path d="M16.500 5h5L19 9z" fill="#333" stroke="none" /><circle cx="11" cy="18" r="6" fill="#4f9fda" stroke="#d8ebf7" /><circle cx="18" cy="18" r="6" fill="#4f9fda" stroke="#b5d7ef" /></Svg>
          <Svg width="26" height="26" viewBox="0 0 26 26" stroke="#666"><path d="M17 3.500A11 11 0 1024 13" /><path d="M14 0l6 3.500L14 7z" fill="#333" stroke="none" /></Svg>
          <Trim />
        </IconGrid>
        <IconGrid $cols="21px 21px 21px" $rows="21px 21px 21px" $pt={1}>
          <Split />
          <Split two />
          <PinSmall color="#c4c4c4" cut />
          <Svg width="12" height="12" viewBox="0 0 12 12"><path d="M0 7h5v5H0zM7 7h5v5H7zM7 0h5v5H7z" fill="#4f8fc0" /><path d="M.5.5h4v4h-4z" stroke="#888" /></Svg>
          <Svg width="12" height="12" viewBox="0 0 12 12" stroke="#ccc"><path d="M.5.5h11v11H.5z" fill="#e8e8e8" /><path d="M.5 5.500h6v6h-6z" fill="#f8f8f8" /></Svg>
          <PinSmall color="#777" />
          <ExtendSmall />
          <ExtendSmall multi />
          <Cross size={8} color="#e03a3f" sw={2.2} />
        </IconGrid>
      </GroupBody>
      <GroupTitle>Modificar</GroupTitle>
    </Group>
    <Group $w={45}>
      <GroupBody>
        <IconGrid $cols="35px 8px" $rows="30px 30px" $pt={3}>
          <Svg width="24" height="16" viewBox="0 0 24 16" stroke="#777"><path d="M.5 0v7M23.500 0v7M1 3.500h22M4 1.500l-3 2 3 2M20 1.500l3 2-3 2" /><path d="M.5 9.500h23v5H.5z" fill="#f4ab2c" stroke="#d98e17" /></Svg>
          <Caret size={4} />
          <Svg width="26" height="26" viewBox="0 0 26 26"><path d="M0 10L9 1M16 25l9-9" stroke="#888" /><path d="M5 6l16 14M5 6v4M5 6h4M21 20v-4M21 20h-4" stroke="#4593d0" strokeWidth="1.500" /></Svg>
          <Caret size={4} />
        </IconGrid>
      </GroupBody>
      <GroupTitle>Medir</GroupTitle>
    </Group>
    <Group $w={39}>
      <GroupBody>
        <IconGrid $cols="38px" $rows="30px 30px" $pt={3}>
          <Svg width="26" height="26" viewBox="0 0 26 26" stroke="#777"><path d="M4 2H1v23h4M21 25h4V12" /><circle cx="9" cy="10" r="5" fill="#eee" /><path d="M10 14l2-2h8v7l-2 2h-8z" fill="#d5d5d5" /><path d="M20-1l1.500 3 3-1-1 3 3 1.500-3 1.500 1 3-3-1L20 12l-1.500-3-3 1 1-3-3-1.500 3-1.500-1-3 3 1z" fill="#f09a1c" stroke="none" /></Svg>
          <Svg width="25" height="25" viewBox="0 0 25 25" stroke="#666"><path d="M2 1h6v6H2z" fill="#fff" /><path d="M10 4h6M5 9v6M10 8l6 6" /><path d="M15 2l3 2-3 2zM3 13h4l-2 3zM17 12v4h-4z" fill="#444" stroke="none" /><path d="M19 1h6v6h-6zM0 18h9v6H0zM20 13l5 5-5 5-5-5z" fill="#4f9fda" stroke="none" /></Svg>
        </IconGrid>
      </GroupBody>
      <GroupTitle>Crear</GroupTitle>
    </Group>
    <Group $w={213} $context>
      <GroupBody $context>
        <Stack $w={127} $pt={1}>
          <StackRow $h={30} $pl={6} $gap={4}><Frustum top /><Text $ls={-0.42}>Editar parte superior</Text></StackRow>
          <StackRow $h={30} $pl={6} $gap={4}><Frustum /><Text $ls={-0.42}>Editar base</Text></StackRow>
        </Stack>
        <BigButton $w={85} $pt={3}>
          <Svg width="27" height="27" viewBox="0 0 27 27" stroke="#777"><path d="M1 6V1h5M18 1h5v5M1 18v5h5" /><path d="M4 6l3-3h13v14l-3 3H4z" fill="#e2e2e2" /><path d="M4 6h13v14M17 6l3-3" stroke="#a5a5a5" /><path d="M15 26l6-7" stroke="#2b87cc" strokeWidth="3" /><path d="M20 15v4l3 2 4-1" stroke="#2b87cc" strokeWidth="2" /></Svg>
          <BigLabel $pt={3}>Configuración de<br />visibilidad</BigLabel>
        </BigButton>
      </GroupBody>
      <GroupTitle $bg="#e9ecdf">Modo</GroupTitle>
    </Group>
    <Group $w={162} $context>
      <GroupBody $context>
        <BigButton $w={87} $pl={9} $pt={3}>
          <Svg width="27" height="27" viewBox="0 0 27 27" stroke="#2b87cc"><path d="M5 4h17l-2 17H4z" fill="#cfe4f5" stroke="none" /><path d="M4 4h21M0 21h14M7 0L4 25M22 0l-2 13" strokeWidth="1.500" /><path d="M11 27l1.500-5L20 14.500l3.500 3.500-7.500 7z" fill="#f4b541" stroke="none" /><path d="M11 27l1.500-4.500 3 3z" fill="#444" stroke="none" /><circle cx="24" cy="14.500" r="2.600" fill="#dd3a35" stroke="none" /></Svg>
          <BigLabel $pt={3}>Editar<br />plano de trabajo</BigLabel>
        </BigButton>
        <Stack $w={13} $pt={47}><Caret size={4} /></Stack>
        <BigButton $w={61} $pt={3}>
          <Svg width="26" height="27" viewBox="0 0 26 27"><path d="M1 5l10-4v21L1 26z" fill="#3fa55f" /><path d="M11 1l3 2v20l-3-1z" fill="#2d8249" /><path d="M9 9l4 1v6l-4 1z" fill="#eee" stroke="#888" /><path d="M13 13h5" stroke="#555" strokeWidth="1.500" /><path d="M18 10l4-2h4v8l-3 2h-5z" fill="#d8d8d8" stroke="#888" /></Svg>
          <BigLabel $pt={3}><Text $ls={-0.38}>Seleccionar</Text><br />nuevo</BigLabel>
        </BigButton>
      </GroupBody>
      <GroupTitle $bg="#e9ecdf">Plano de trabajo</GroupTitle>
    </Group>
    <Group $w={102} $context>
      <GroupBody $context>
        <Stack $w={100} $pt={12}>
          <StackRow $h={18} $pl={2} $boxed $dim $gap={5}>
            <Svg width="13" height="12" viewBox="0 0 13 12" stroke="#c0cdd1"><path d="M1 6l5-2 6 2v5H2zM6 0v6" fill="#d5dfe2" /><circle cx="6" cy="4" r="2" /></Svg>
            <Text>Cara</Text>
          </StackRow>
          <StackRow $h={20} $pl={2} $dim $gap={5}>
            <Svg width="13" height="12" viewBox="0 0 13 12" stroke="#ccc"><path d="M0 6l6-5 7 5-7 6z" fill="#ddd" /><circle cx="6.500" cy="6" r="2" /></Svg>
            <Text>Plano de trabajo</Text>
          </StackRow>
        </Stack>
      </GroupBody>
      <GroupTitle $bg="#e9ecdf">Colocación</GroupTitle>
    </Group>
    <Group $w={131} $context>
      <GroupBody $context>
        <BigButton $w={52} $pt={3}><LoadProject /><BigLabel $pt={3}>Cargar en<br />proyecto</BigLabel></BigButton>
        <BigButton $w={76} $pt={3}><LoadProject close /><BigLabel $pt={3}>Cargar en<br /><Text $ls={-0.42}>proyecto y cerrar</Text></BigLabel></BigButton>
      </GroupBody>
      <GroupTitle $bg="#dbe1ec">Editor de familias</GroupTitle>
    </Group>
    <RibbonTail />
  </Ribbon>
);

const ProjectBrowser = () => (
  <Browser>
    <PanelHeader>
      <Text $ls={-0.4}>Navegador de proyectos - M_Transición...</Text>
      <Cross />
    </PanelHeader>
    <SearchBox>
      <Svg width="13" height="13" viewBox="0 0 13 13" stroke="#777" strokeWidth="1.700"><circle cx="5" cy="5" r="4.300" /><path d="M8.500 8.500L13 13" /></Svg>
      Buscar
    </SearchBox>
    <TreeRow $selected>
      <Expander>+</Expander>
      <TreeIcon><Svg width="13" height="13" viewBox="0 0 13 13" stroke="#777"><path d="M1 4V1h3M9 1h3v3M12 9v3H9M4 12H1V9" /><path d="M4 5l2-1.500h4L9 9H4z" /></Svg></TreeIcon>
      Vistas (todo)
    </TreeRow>
    <TreeRow>
      <Expander />
      <TreeIcon><Svg width="13" height="10" viewBox="0 0 13 10" stroke="#666"><path d="M.5.5h8l4 4v5H.5zM8.500.5v4h4" /></Svg></TreeIcon>
      Planos (todo)
    </TreeRow>
    <TreeRow>
      <Expander>+</Expander>
      <TreeIcon><Svg width="12" height="11" viewBox="0 0 12 11" stroke="#777"><path d="M.5.5h4v4h-4zM.5 6.500h6V.5h5v10H.5z" /></Svg></TreeIcon>
      Familias
    </TreeRow>
    <TreeRow>
      <Expander>+</Expander>
      <TreeIcon><Svg width="13" height="12" viewBox="0 0 13 12" stroke="#666"><path d="M3 .5H.5v11H3M10 .5h2.500v11H10M6 6h4v4H6z" /><circle cx="5.500" cy="4.500" r="2.300" /></Svg></TreeIcon>
      Grupos
    </TreeRow>
    <TreeRow>
      <Expander />
      <TreeIcon><Svg width="12" height="10" viewBox="0 0 12 10" stroke="#d19a55"><rect x="1" y="4" width="7" height="4" rx="2" transform="rotate(-40 4 6)" /><rect x="5" y="2" width="7" height="4" rx="2" transform="rotate(-40 8 4)" /></Svg></TreeIcon>
      Vínculos de Revit
    </TreeRow>
  </Browser>
);

const DocumentArea = () => (
  <Workspace>
    <DocTabs>
      <DocTab $w={107}><PlanIcon /> <Text>NIV_L00A_NPT</Text></DocTab>
      <DocTab $w={107}><PlanIcon /> Ref. Level</DocTab>
      <DocTab $w={106} $active><House /> <Text $ls={-0.5}>Vista 1</Text><Spacer /><Cross /></DocTab>
      <Spacer />
      <Svg width="7" height="7" viewBox="0 0 7 7" stroke="#777"><path d="M0 1h7" /><path d="M0 3h7L3.500 7z" fill="#777" stroke="none" /></Svg>
      <Spacer $w={3} />
    </DocTabs>
    <ViewRow>
      <Viewport>
        <ModelView />
        <CubeSlot><ViewCube /></CubeSlot>
        <NavBar>
          <Svg width="21" height="5" viewBox="0 0 21 5" stroke="#999"><circle cx="17" cy="2.500" r="2" /></Svg>
          <Svg width="17" height="17" viewBox="0 0 17 17" stroke="#a5a5a5"><circle cx="7" cy="7" r="6.300" fill="#e9e9e9" /><circle cx="7" cy="7" r="3" fill="#fff" /><path d="M9 10l2-1h5v5l-2 2H9z" fill="#7db3de" stroke="#5b99c9" /></Svg>
          <Caret size={4} color="#777" />
          <NavRule />
          <Svg width="12" height="12" viewBox="0 0 12 12"><path d="M1 1h9v8H1z" fill="#9cc48a" stroke="#7ea86c" strokeDasharray="2 1" /><circle cx="8" cy="8" r="2.300" fill="#fff" stroke="#777" /><path d="M10 10l2 2" stroke="#777" /></Svg>
          <Caret size={4} color="#777" />
          <Svg width="21" height="5" viewBox="0 0 21 5" stroke="#999"><circle cx="17" cy="2.500" r="2" /></Svg>
        </NavBar>
      </Viewport>
      <VScroll>
        <ScrollArrow><Svg width="8" height="5" viewBox="0 0 8 5" stroke="#777" strokeWidth="1.500"><path d="M1 4l3-3 3 3" /></Svg></ScrollArrow>
        <VThumb />
        <Spacer />
        <ScrollArrow><Svg width="8" height="5" viewBox="0 0 8 5" stroke="#777" strokeWidth="1.500"><path d="M1 1l3 3 3-3" /></Svg></ScrollArrow>
      </VScroll>
    </ViewRow>
    <ViewControls>
      <ControlIcons>
        <ScaleText>1 : 20</ScaleText>
        <Spacer $w={8} />
        <IconSlot $w={16}><Svg width="13" height="10" viewBox="0 0 13 10" stroke="#666"><path d="M.5.500h12v9H.5z" fill="#ddd" /><path d="M2 2h2M9 2h2M2 8h2M9 8h2" strokeWidth="1.300" /><path d="M4.500 3.500h4v3h-4z" fill="#888" /></Svg></IconSlot>
        <IconSlot $w={16}><Svg width="12" height="12" viewBox="0 0 12 12" stroke="#3c8fcd"><path d="M.5 3.500l3-3h8v7l-3 4h-8z" fill="#a3d4f3" /><path d="M.5 3.500h8v8M8.500 3.500l3-3" /></Svg></IconSlot>
        <IconSlot $w={16}><Svg width="14" height="13" viewBox="0 0 14 13" stroke="#666"><path d="M0 9h4V4h9M9 0v4M4 4v8" /><path d="M8 7l5 5M13 7l-5 5" stroke="#e03a3f" strokeWidth="1.800" /></Svg></IconSlot>
        <IconSlot $w={16}><Svg width="14" height="13" viewBox="0 0 14 13" stroke="#5a7c94"><path d="M0 9h4V4h9M9 0v4M4 4v8" /><circle cx="10" cy="8" r="3" fill="#53b5b9" stroke="none" /></Svg></IconSlot>
        <IconSlot $w={16}><Svg width="14" height="13" viewBox="0 0 14 13" stroke="#777"><path d="M1 7l6-6 6 6M3 6v6h3" /><path d="M6 7h6v5H6zM9 4v3" fill="#b5e0df" stroke="#4fa9ab" /></Svg></IconSlot>
        <IconSlot $w={16}><Svg width="12" height="9" viewBox="0 0 12 9" stroke="#777"><circle cx="2.800" cy="6" r="2.300" /><circle cx="9.200" cy="6" r="2.300" /><path d="M1 5l2-4M11 5L9 1M5 5.500h2" /></Svg></IconSlot>
        <IconSlot $w={16}><Svg width="14" height="12" viewBox="0 0 14 12" stroke="#777"><path d="M1 0v10M12 0v4M1 2h11M1 8h6" /><circle cx="10" cy="8" r="3" fill="#53b5b9" stroke="none" /></Svg></IconSlot>
        <IconSlot $w={16}><Svg width="14" height="12" viewBox="0 0 14 12" stroke="#777"><path d="M1 1h11v3H1zM1 7h7M1 10h6" /><circle cx="11" cy="8" r="3" fill="#53b5b9" stroke="none" /></Svg></IconSlot>
        <Spacer $w={1} />
        <Svg width="4" height="8" viewBox="0 0 5 8" stroke="#777"><path d="M4 1L1 4l3 3" /></Svg>
      </ControlIcons>
      <HThumb />
      <Spacer />
      <Svg width="5" height="8" viewBox="0 0 5 8" stroke="#777" strokeWidth="1.500"><path d="M1 1l3 3-3 3" /></Svg>
      <Spacer $w={9} />
      <Svg width="6" height="6" viewBox="0 0 6 6"><path d="M4 0h1.500v1.500H4zM4 4h1.500v1.500H4zM0 4h1.500v1.500H0z" fill="#888" /></Svg>
      <Spacer $w={2} />
    </ViewControls>
  </Workspace>
);

const PropertiesPanel = () => (
  <Properties>
    <PropertiesTitle $bg="#dadada"><Text $ls={-0.4}>Propiedades</Text><Cross /></PropertiesTitle>
    <TypePreview>
      <Svg width="55" height="55" viewBox="0 0 55 55">
        <path d="M.5.5h54v54H.5z" fill="#f7f7f7" stroke="#c4c4c4" />
        <path d="M8 10h45v44H8z" fill="#3d3d3d" />
        <path d="M4 6l7-5v37l-7 4z" fill="#929292" />
        <path d="M11 1h37a2 2 0 012 2v34a2 2 0 01-2 2H11z" fill="#6d6d6d" />
        <text x="31" y="30" fontSize="28" fontWeight="800" textAnchor="middle" fill="#fff" textLength="18" lengthAdjust="spacingAndGlyphs">R</text>
      </Svg>
      <Caret color="#888" size={6} />
    </TypePreview>
    <TypeCombo>
      <ComboField>
        <Text>Uniones de tubería (1)</Text>
        <Svg width="7" height="4" viewBox="0 0 7 4" stroke="#777"><path d="M.5.5l3 3 3-3" /></Svg>
      </ComboField>
      <EditType>
        <Svg width="11" height="11" viewBox="0 0 11 11" stroke="#b5b5b5"><path d="M.5 1h4v4h-4zM6 1h4v4H6zM.5 6.500h4v4h-4zM6 5h4.500v5.500H6zM7 7h3M7 9h3" /></Svg>
        Editar tipo
      </EditType>
    </TypeCombo>
    <PropList>
      {PROPERTIES.map((section) => (
        <React.Fragment key={section.title}>
          <PropHeading>{section.title}{chevrons}</PropHeading>
          {section.rows.map((row) => (
            <PropRow key={row.name} $dim={row.dim}>
              <PropName>{row.name}</PropName>
              {row.check ? <PropValue><CheckBox /></PropValue> : <PropValue $kind={row.kind}>{row.value}</PropValue>}
              {!row.noAssoc && <AssocButton />}
            </PropRow>
          ))}
        </React.Fragment>
      ))}
    </PropList>
    <PropFooter>
      <SortActive><Svg width="11" height="10" viewBox="0 0 11 10" stroke="#3b6f88"><path d="M0 1h5M0 3.500h5M0 6h5M0 9h5M8 0v10" /><path d="M8 2h2M8 6h2" strokeWidth="2" /></Svg></SortActive>
      <Svg width="10" height="14" viewBox="0 0 10 14" stroke="#444"><path d="M8.500 1v11M7 10l1.500 2L10 10" /><text x="0" y="6" fontSize="7" fill="#2c86b8" stroke="none">A</text><text x="0" y="13" fontSize="7" fill="#555" stroke="none">Z</text></Svg>
      <Svg width="18" height="14" viewBox="-5 0 18 14" stroke="#444"><path d="M8.500 1v11M7 10l1.500 2L10 10" /><text x="0" y="6" fontSize="7" fill="#555" stroke="none">Z</text><text x="0" y="13" fontSize="7" fill="#2c86b8" stroke="none">A</text></Svg>
      <Spacer />
      <ApplyButton>Aplicar</ApplyButton>
    </PropFooter>
  </Properties>
);

const Status = () => (
  <StatusBar>
    <Text $ls={-0.39}>Mantenga pulsado el botón y mueva el ratón para girar la vista.</Text>
    <Spacer />
    <IconSlot $w={20}><Svg width="13" height="13" viewBox="0 0 13 13"><rect x="0" y="1" width="8" height="4" rx="2" stroke="#d9a35c" /><path d="M8 0l4 4M12 0L8 4" stroke="#e03a3f" strokeWidth="1.800" /><path d="M6 5v7l2-1.500 1 2 1-.5-1-2h2z" fill="#fff" stroke="#555" /></Svg></IconSlot>
    <IconSlot $w={20}><Svg width="13" height="13" viewBox="0 0 13 13"><path d="M0 8l3-4h5v4z" fill="#4593c8" /><path d="M8 0l4 4M12 0L8 4" stroke="#e03a3f" strokeWidth="1.800" /><path d="M6 5v7l2-1.500 1 2 1-.5-1-2h2z" fill="#fff" stroke="#555" /></Svg></IconSlot>
    <IconSlot $w={20}><Svg width="12" height="13" viewBox="0 0 12 13" stroke="#777"><path d="M1 1h6M2 1v4M6 1v4M0 6h6M3 6v4" /><path d="M6 4v7l2-1.500 1 2 1-.5-1-2h2z" fill="#fff" /></Svg></IconSlot>
    <IconSlot $w={20}><Svg width="12" height="13" viewBox="0 0 12 13"><path d="M1 3l7-3v9l-7 3z" fill="#4593c8" /><path d="M6 4v7l2-1.500 1 2 1-.5-1-2h2z" fill="#fff" stroke="#555" /></Svg></IconSlot>
    <IconSlot $w={20}><Svg width="13" height="13" viewBox="0 0 13 13" stroke="#444"><path d="M4 0v9M0 4.500h9M3 1.500l1-1.500 1 1.500M1 3.500l-1 1 1 1" /><path d="M7 5v7l2-1.500 1 2 1-.5-1-2h2z" fill="#fff" /></Svg></IconSlot>
    <IconSlot $w={20}><Svg width="12" height="12" viewBox="0 0 12 12" stroke="#aaa" strokeWidth="1.800"><circle cx="6" cy="6" r="5" strokeDasharray="1.800 2.100" /></Svg></IconSlot>
    <IconSlot $w={17}><Svg width="13" height="13" viewBox="0 0 13 13" stroke="#666"><path d="M.5.500h12L8 6v6l-3-1.500V6z" fill="#c9c9c9" /></Svg></IconSlot>
    <Text>:1</Text>
    <Spacer $w={51} />
  </StatusBar>
);

const WindowsBar = () => (
  <Taskbar>
    <Weather>
      <Svg width="20" height="20" viewBox="0 0 20 20"><circle cx="11" cy="10" r="8.500" fill="#f0982a" /><path d="M2 7a2.500 2.500 0 01.5-5 3.200 3.200 0 016 0A2.500 2.500 0 018 7zM11 18a2.300 2.300 0 010-4.500 3 3 0 015.500-.5A2.500 2.500 0 0117 18z" fill="#cfdcf5" /></Svg>
      <div>14°C<br />Parc. soleado</div>
    </Weather>
    <Spacer $w={16} />
    <Svg width="20" height="20" viewBox="0 0 20 20"><path d="M0 0h9.500v9.500H0zM10.500 0H20v9.500h-9.500zM0 10.500h9.500V20H0zM10.500 10.500H20V20h-9.500z" fill="#41b9f2" /></Svg>
    <TaskSearch>
      <Svg width="12" height="12" viewBox="0 0 12 12" stroke="#222" strokeWidth="1.500"><circle cx="5" cy="5" r="4.200" /><path d="M8 8l4 4" /></Svg>
      Buscar
    </TaskSearch>
    <TaskIcons>
      <TaskCell><Svg width="20" height="18" viewBox="0 0 20 18"><path d="M5 0h15v13H5z" fill="#f3f3f3" /><path d="M0 5h14v13H0z" fill="#8a8a8a" fillOpacity=".9" /></Svg></TaskCell>
      <TaskCell>
        <Svg width="20" height="20" viewBox="0 0 20 20">
          <circle cx="10" cy="10" r="10" fill="#e2443a" /><path d="M10 10L1.300 5A10 10 0 009 20l5-8z" fill="#2fa24c" /><path d="M10 10h10a10 10 0 01-11 10z" fill="#f7c92d" /><circle cx="10" cy="10" r="4.500" fill="#3d7de8" stroke="#fff" />
          <circle cx="17" cy="3" r="6" fill="#4a7fd0" stroke="#a9c9f0" /><circle cx="17" cy="1" r="1.800" stroke="#fff" /><path d="M13.500 6a3.500 3 0 017 0" stroke="#fff" />
          <path d="M8 24h4" stroke="#a5a5a5" strokeWidth="2" strokeLinecap="round" />
        </Svg>
      </TaskCell>
      <TaskCell>
        <Svg width="20" height="20" viewBox="0 0 20 20"><circle cx="8" cy="3" r="3.300" fill="#7f83e8" /><circle cx="15.500" cy="5" r="2.600" fill="#8f93f0" /><path d="M12 9h7v7a3.500 3.500 0 01-7 2z" fill="#7a6fe0" /><path d="M3 8h10v8a5 5 0 01-10 0z" fill="#6a6de0" /><rect x="0" y="9" width="9" height="9" rx="1.500" fill="#4b44b0" /><text x="4.500" y="16" fontSize="7" fontWeight="700" textAnchor="middle" fill="#fff">T</text></Svg>
      </TaskCell>
      <TaskCell><OfficeIcon letter="X" light="#7cc95a" dark="#1d8044" /></TaskCell>
      <TaskCell>
        <Svg width="20" height="20" viewBox="0 0 20 20"><circle cx="10" cy="10" r="10" fill="#1c7fd0" /><path d="M0 9A10 10 0 0120 9c0 4-4 5.500-7 4 1-1.500.5-5-3-5-4 0-7 1-10 1z" fill="#3cc5b5" /><path d="M6 12c0 5 5 7.500 10 4-4 .5-6-2-5.500-5L8 9c-1.500 1-2 2-2 3z" fill="#0f4f9c" /></Svg>
      </TaskCell>
      <TaskCell><Svg width="20" height="20" viewBox="0 0 20 20"><path d="M0 0h20v20H0z" fill="#f4e9e6" /><text x="10" y="17" fontSize="20" fontWeight="800" textAnchor="middle" fill="#b2242b" textLength="14" lengthAdjust="spacingAndGlyphs">A</text></Svg></TaskCell>
      <TaskCell>
        <Svg width="20" height="20" viewBox="0 0 20 20"><circle cx="10.500" cy="10" r="9.300" fill="#e8573c" /><path d="M10.500.7a9.300 9.300 0 019.200 9.300h-9.200z" fill="#f9a98c" /><rect x="0" y="8" width="10" height="10" rx="2" fill="#b5261e" /><text x="5" y="15.600" fontSize="7.500" fontWeight="700" textAnchor="middle" fill="#fff">P</text></Svg>
      </TaskCell>
      <TaskCell><OfficeIcon letter="A" light="#e86a86" dark="#b51f45" /></TaskCell>
      <TaskCell><OfficeIcon letter="W" light="#4fc0f0" dark="#1a52c4" /></TaskCell>
      <TaskCell $active>
        <Svg width="18" height="20" viewBox="0 0 18 20"><path d="M0 1h4v18H0z" fill="#2f83f2" /><path d="M3 0h14a1 1 0 011 1v18H3z" fill="#0f5ae0" /><path d="M3 14h15v5.500H3z" fill="#0a3da0" /><text x="10.500" y="11" fontSize="11" fontWeight="700" textAnchor="middle" fill="#fff">R</text><text x="10.500" y="18.500" fontSize="4" fontWeight="700" textAnchor="middle" fill="#cfe0ff">RVT</text><path d="M4 24h11" stroke="#58b8e8" strokeWidth="2" strokeLinecap="round" /></Svg>
      </TaskCell>
      <TaskCell>
        <Svg width="20" height="20" viewBox="0 0 20 20"><path d="M1 5h13v10H1z" stroke="#666" /><circle cx="15" cy="9" r="4.700" fill="#f5f5f5" /><text x="15" y="11.500" fontSize="7" fontStyle="italic" fontWeight="700" textAnchor="middle" textLength="6" lengthAdjust="spacingAndGlyphs" fill="#222">hp</text><path d="M9 24h3" stroke="#a5a5a5" strokeWidth="2" strokeLinecap="round" /></Svg>
      </TaskCell>
    </TaskIcons>
    <Spacer />
    <IconSlot $w={26}><Svg width="9" height="6" viewBox="0 0 9 6" stroke="#eee" strokeWidth="1.500"><path d="M.5 5l4-4 4 4" /></Svg></IconSlot>
    <IconSlot $w={27}><Cloud /></IconSlot>
    <IconSlot $w={27}><Cloud off /></IconSlot>
    <IconSlot $w={26}><Svg width="10" height="14" viewBox="0 0 10 14"><rect x="3" y="1" width="4" height="8" rx="2" fill="#3c8f9c" stroke="#8bd0d8" /><path d="M.8 6.500a4.200 4.200 0 008.400 0M5 11v2.500" stroke="#aaa" /></Svg></IconSlot>
    <IconSlot $w={25}><Svg width="14" height="13" viewBox="0 0 14 13" stroke="#ddd"><path d="M9 1.500H1v8h9V7M3 12.500h5M10.500 1h3v4h-3zM12 5v8" /></Svg></IconSlot>
    <IconSlot $w={16}><Svg width="14" height="12" viewBox="0 0 14 12" stroke="#ddd"><path d="M1 4h2l3-3v10L3 8H1zM8 4a3 3 0 010 4M10 2.500a5 5 0 010 7M12 1a7.500 7.500 0 010 10" /></Svg></IconSlot>
    <Clock>15:30<br />06/02/2026</Clock>
    <Spacer $w={7} />
    <Svg width="13" height="13" viewBox="0 0 13 13" stroke="#ddd"><path d="M6 1.500C3 2 3 4 3 6L1 10h10L9.500 8M5 12h3M8 1h3.500L8 5h3.500" /></Svg>
    <Spacer $w={16} />
  </Taskbar>
);

const App = () => {
  return (
    <React.Fragment>
      <GlobalStyle />
      <Page>
        <TopBar />
        <TabsRow>
          <RibbonTab $w={47} $kind="file">Archivo</RibbonTab>
          <RibbonTab $w={43}>Crear</RibbonTab>
          <RibbonTab $w={47}>Insertar</RibbonTab>
          <RibbonTab $w={48}>Anotar</RibbonTab>
          <RibbonTab $w={37}>Vista</RibbonTab>
          <RibbonTab $w={58}>Gestionar</RibbonTab>
          <RibbonTab $w={85}>Complementos</RibbonTab>
          <RibbonTab $w={62}>EvolveLAB</RibbonTab>
          <Spacer $w={2} />
          <RibbonTab $w={92} $kind="context"><Text $ls={-0.5}>Modificar | Fundir</Text></RibbonTab>
          <TabEnd>
            <Svg width="13" height="8" viewBox="0 0 13 8" stroke="#555"><rect x=".5" y=".5" width="12" height="7" rx="2" fill="#eee" /><path d="M4.500 5.500l2-3 2 3z" fill="#444" stroke="none" /></Svg>
            <Caret size={4} />
          </TabEnd>
        </TabsRow>
        <RibbonPanels />
        <OptionsBar>
          <Text $ls={-0.4}>Modificar | Fundir</Text>
          <OptionsDivider />
          <Text>Profundidad</Text>
          <OptionsInput>13.5</OptionsInput>
        </OptionsBar>
        <Main>
          <ProjectBrowser />
          <DocumentArea />
          <PropertiesPanel />
        </Main>
        <Status />
        <WindowsBar />
      </Page>
    </React.Fragment>
  );
};

export default App;
